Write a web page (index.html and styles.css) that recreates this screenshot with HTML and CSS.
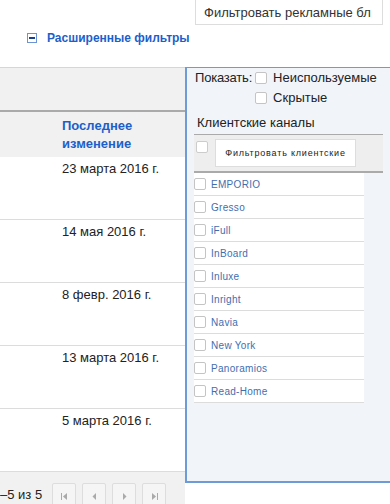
FILE: index.html
```html
<!DOCTYPE HTML><html>
<head>
  <meta name="viewport" content="width=device-width, initial-scale=1">
  <link rel="stylesheet" href="styles.css">
</head>
<body>
  <div class="top">
    <button class="ad-filter">Фильтровать рекламные бл</button>
  </div>
  <div class="adv">
    <span class="minus"></span>
    <a class="adv-link">Расширенные фильтры</a>
  </div>

  <div class="main">
    <div class="grid">
      <div class="head-top"></div>
      <div class="head-row">Последнее<br>изменение</div>
      <div class="row">23 марта 2016 г.</div>
      <div class="row">14 мая 2016 г.</div>
      <div class="row">8 февр. 2016 г.</div>
      <div class="row">13 марта 2016 г.</div>
      <div class="row">5 марта 2016 г.</div>
      <div class="pager">
        <span class="count">–5 из 5</span>
        <span class="pbtn"><svg width="7" height="7" viewBox="0 0 7 7"><rect x="0" y="0" width="1" height="7" fill="#aaa"/><path d="M6 0 L2 3.5 L6 7 Z" fill="#aaa"/></svg></span>
        <span class="pbtn"><svg width="7" height="7" viewBox="0 0 7 7"><path d="M5 0 L1.5 3.5 L5 7 Z" fill="#aaa"/></svg></span>
        <span class="pbtn"><svg width="7" height="7" viewBox="0 0 7 7"><path d="M2 0 L5.5 3.5 L2 7 Z" fill="#aaa"/></svg></span>
        <span class="pbtn"><svg width="7" height="7" viewBox="0 0 7 7"><path d="M1 0 L5 3.5 L1 7 Z" fill="#aaa"/><rect x="6" y="0" width="1" height="7" fill="#aaa"/></svg></span>
      </div>
    </div>

    <div class="panel">
      <div class="show">
        <span class="show-label">Показать:</span>
        <div class="show-opts">
          <label class="opt"><span class="cb"></span>Неиспользуемые</label>
          <label class="opt"><span class="cb"></span>Скрытые</label>
        </div>
      </div>
      <div class="ch-title">Клиентские каналы</div>
      <div class="ch-head">
        <span class="cb"></span>
        <button class="ch-filter">Фильтровать клиентские</button>
      </div>
      <div class="ch-list">
        <div class="ch-item"><span class="cb"></span>EMPORIO</div>
        <div class="ch-item"><span class="cb"></span>Gresso</div>
        <div class="ch-item"><span class="cb"></span>iFull</div>
        <div class="ch-item"><span class="cb"></span>InBoard</div>
        <div class="ch-item"><span class="cb"></span>Inluxe</div>
        <div class="ch-item"><span class="cb"></span>Inright</div>
        <div class="ch-item"><span class="cb"></span>Navia</div>
        <div class="ch-item"><span class="cb"></span>New York</div>
        <div class="ch-item"><span class="cb"></span>Panoramios</div>
        <div class="ch-item"><span class="cb"></span>Read-Home</div>
      </div>
    </div>
  </div>
</body>
</html>
```

FILE: styles.css
```css
html {font-family: "Liberation Sans", Arial, sans-serif; color: #222;}
body {margin: 0; width: 390px; height: 504px; overflow: hidden; background: #fff;}

.top {height: 25px; display: flex; padding-left: 195px;}
.ad-filter {width: 188px; height: 26px; margin-top: -1px; padding: 0 0 0 8px; border: 1px solid #ddd; background: #fff; font-family: inherit; font-size: 13px; color: #333; text-align: left; white-space: nowrap; overflow: hidden;}

.adv {height: 24px; display: flex; align-items: center; padding: 1px 0 0 27px; margin-bottom: 17px;}
.minus {width: 8px; height: 8px; border: 1px solid #6b93d6; background: #fff; position: relative; margin-right: 10px; box-sizing: content-box;}
.minus::after {content: ""; position: absolute; left: 1px; right: 1px; top: 3px; height: 2px; background: #1a3f8f;}
.adv-link {font-size: 12px; font-weight: bold; color: #1c5fca; cursor: pointer;}

.main {display: flex; align-items: flex-start;}

.grid {width: 185px; flex-shrink: 0; border-top: 1px solid #d6d6d6;}
.head-top {height: 42px; background: #f1f1f1; border-bottom: 2px solid #aaa;}
.head-row {height: 40px; padding: 5px 0 0 62px; background: #f1f1f1; font-size: 13px; font-weight: bold; line-height: 18px; color: #1c5fca;}
.row {height: 58px; padding: 4px 0 0 62px; border-bottom: 1px solid #dcdcdc; font-size: 13px; line-height: 16px; color: #222;}
.pager {height: 32px; background: #f1f1f1; display: flex; align-items: flex-start; gap: 6px; box-sizing: border-box; padding-top: 11px;}
.count {font-size: 13px; line-height: 16px; margin-top: 4px; margin-right: 4px; color: #222;}
.pbtn {width: 24px; height: 24px; border: 1px solid #ddd; border-radius: 2px; background: #f5f5f5; display: flex; justify-content: center; padding-top: 9px; box-sizing: border-box;}

.panel {width: 196px; height: 410px; flex-shrink: 0; background: #f1f4f9; border-top: 1px solid #6d9bd8; border-left: 2px solid #6d9bd8; border-bottom: 2px solid #6d9bd8; padding: 3px 0 0 7px; box-sizing: content-box;}
.cb {width: 12px; height: 12px; border: 1px solid #c4c4c4; border-radius: 2px; background: #fff; box-sizing: border-box; flex-shrink: 0;}

.show {display: flex; font-size: 13px; color: #222;}
.show-label {padding: 0 0 0 1px; margin-right: 3px; line-height: 14px; letter-spacing: -0.2px;}
.show-opts {display: flex; flex-direction: column; gap: 6px;}
.opt {display: flex; align-items: center; gap: 6px; height: 14px; line-height: 14px;}
.ch-title {font-size: 13px; padding: 10px 0 0 3px; height: 19px;}

.ch-head {width: 187px; height: 32px; background: #eee; border-top: 1px solid #aaa; border-bottom: 2px solid #aaa; display: flex; align-items: flex-start; padding: 4px 0 0 2px; box-sizing: content-box;}
.ch-head .cb {margin-top: 2px; border-color: #ccc;}
.ch-filter {margin-left: 7px; width: 141px; height: 28px; background: #fff; border: 1px solid #ddd; font-family: inherit; font-size: 9px; letter-spacing: 0.8px; color: #222; padding: 0;}

.ch-list {width: 170px; background: #fff;}
.ch-item {height: 22px; border-bottom: 1px solid #dcdcdc; display: flex; align-items: center; gap: 5px; font-size: 10px; letter-spacing: 0.3px; color: #3f6eaf;}
```
